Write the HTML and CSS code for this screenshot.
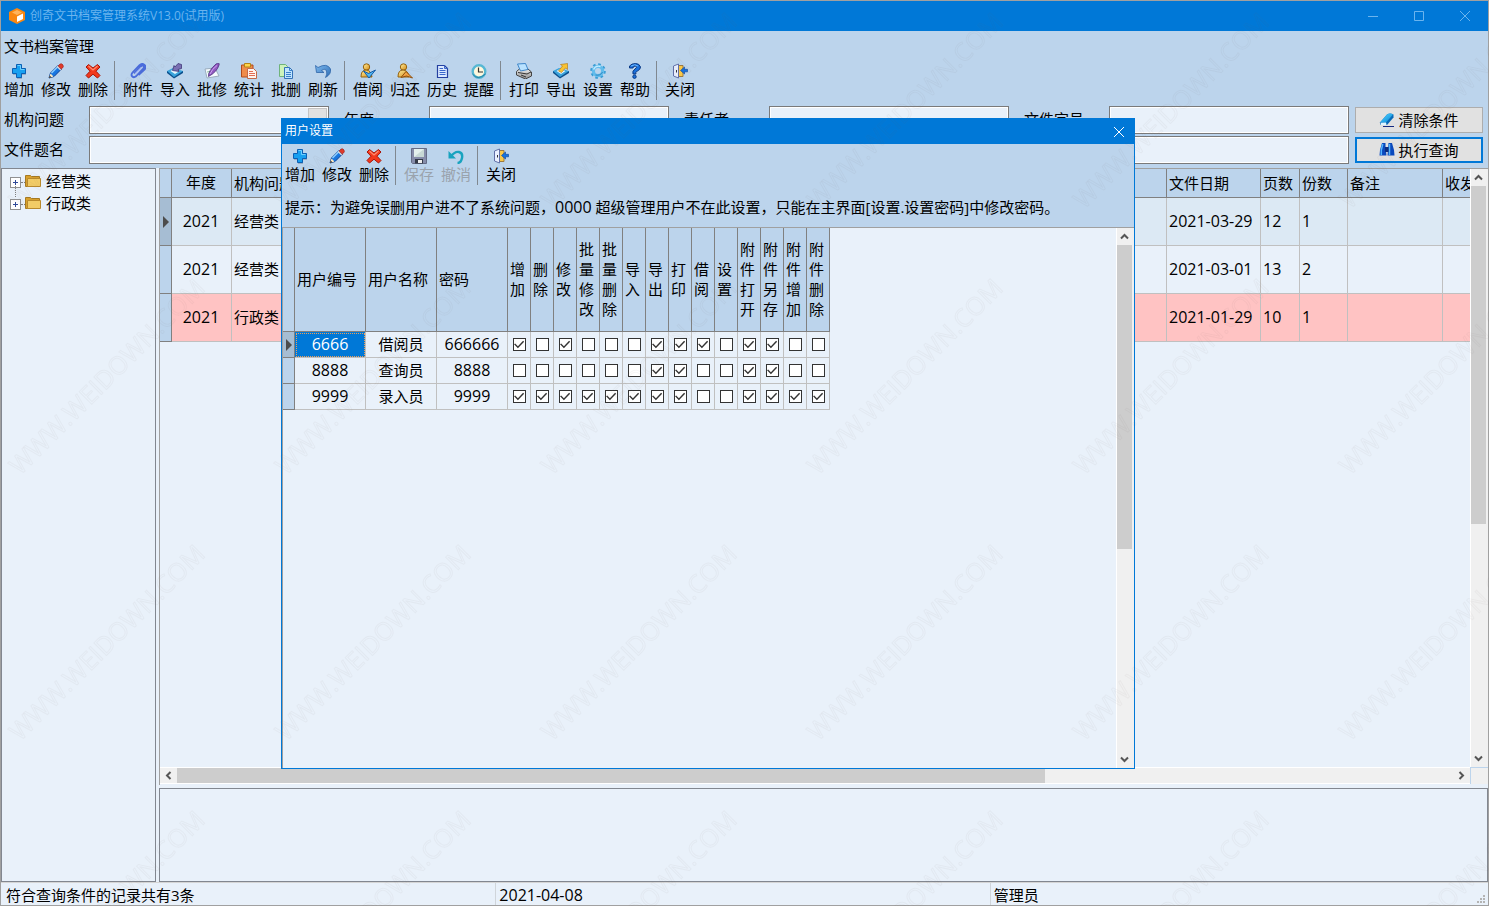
FILE: index.html
```
<!DOCTYPE html>
<html lang="zh-CN">
<head>
<meta charset="utf-8">
<title>创奇文书档案管理系统V13.0(试用版)</title>
<link rel="stylesheet" href="styles.css">
</head>
<body>
<svg class="defs" aria-hidden="true">
  <defs>
    <linearGradient id="gBlue" x1="0" y1="0" x2="1" y2="1"><stop offset="0" stop-color="#5cd4ff"/><stop offset="1" stop-color="#0088d8"/></linearGradient>
    <linearGradient id="gGold" x1="0" y1="0" x2="1" y2="1"><stop offset="0" stop-color="#fff0a0"/><stop offset="1" stop-color="#d88a10"/></linearGradient>
    <linearGradient id="gGray" x1="0" y1="0" x2="0" y2="1"><stop offset="0" stop-color="#f4f4f4"/><stop offset="1" stop-color="#8c8c8c"/></linearGradient>
    <linearGradient id="gSwoosh" x1="0" y1="0" x2="1" y2="1"><stop offset="0" stop-color="#7cb8ee"/><stop offset="1" stop-color="#2c6cb4"/></linearGradient>
    <symbol id="i-add" viewBox="0 0 16 16"><path d="M6 2h5v4.500h4v5h-4V15.500H6v-4H2v-5h4z" fill="#42536a" opacity=".6"/><path d="M5.500 1.500h5v4h4v5h-4v4h-5v-4h-4v-5h4z" fill="#18a0f0" stroke="#0b60b4"/><path d="M6.500 2.500h3v4h4" fill="none" stroke="#6fd0ff"/></symbol>
    <symbol id="i-edit" viewBox="0 0 16 16"><path d="M1 15l1.500-5L10 2.500l3.500 3.500L6 13.500z" fill="#1976e0" stroke="#0c3f94"/><path d="M3.500 10l7-7" stroke="#8fd0ff" stroke-width="1.500"/><path d="M10 3l2-2q2-.8 3 1t-.5 3l-1.200 1.200z" fill="#e03a2a" stroke="#a02018" stroke-width=".6"/><path d="M9.200 3.500l3.500 3.500" stroke="#d9d9d9" stroke-width="1.200"/><path d="M1 15l1.500-4.500 3 3z" fill="#ffe9c0"/><path d="M1 15l.8-2.300 1.500 1.500z" fill="#222"/></symbol>
    <symbol id="i-del" viewBox="0 0 16 16"><path d="M3.500 1.500L8 5l4.500-3.500L15 4l-4 4.200 4 4.300-2.500 2.500L8 11.200 3.500 15 1 12.500l4-4.300L1 4z" fill="#f2381c" stroke="#a81508"/><path d="M3.500 3L8 7l4.500-4" fill="none" stroke="#ff8c70" stroke-width="1.200"/></symbol>
    <symbol id="i-clip" viewBox="0 0 16 16"><path d="M4 10.500l7-7.300q1.500-1.300 2.500-.2t-.3 2.500L6 13.300q-2 1.700-3.700.2T2.500 9.500l7-7.300q2.800-2.400 5-.4t.2 4.600L8.500 12" fill="none" stroke="#4a6cdc" stroke-width="1.800"/><path d="M5 11l6.500-6.500" stroke="#a8bcfa" stroke-width="1.300"/></symbol>
    <symbol id="i-imp" viewBox="0 0 16 16"><path d="M0 8v2l7 5.500L16 10V8z" fill="#0c4f8c"/><path d="M0 8l6-3 10 3-9 6z" fill="#3ba4dc"/><path d="M3.500 8L7 6l5.500 2L8 11z" fill="#e8f6ff"/><path d="M11 .5l3.500 1v4l-3.500 1 1 2-6.500-1L7 2.500l1 1.500z" fill="#7a70b4" stroke="#332a6c" stroke-width=".7"/></symbol>
    <symbol id="i-batch" viewBox="0 0 16 16"><path d="M1 6l10-1 4 8-12 2z" fill="#f5fbff" stroke="#9aacbd"/><path d="M3 9l6-1M4 11l5-1" stroke="#8bbf9c"/><path d="M4.500 13.500Q4 8 12 1q4-2 3 1-2 7-10.500 11.500z" fill="#9058c0" stroke="#4c2c7c" stroke-width=".8"/><path d="M6 11Q8 6 13 2.500" fill="none" stroke="#d0a8f0"/></symbol>
    <symbol id="i-stat" viewBox="0 0 16 16"><path d="M.5 2h11.500v12H.5z" fill="#ef8c4c" stroke="#b14c1c"/><path d="M3.500.5h6V4h-6z" fill="#ffd54a" stroke="#b78416"/><path d="M6.500 5.500h6l3 3v7h-9z" fill="#fff4ee" stroke="#c36a4a"/><path d="M8 8.500h4m-4 2h6m-6 2h6" stroke="#e26c55"/></symbol>
    <symbol id="i-copy" viewBox="0 0 16 16"><path d="M1.500 1.500h6l2 2v10h-8z" fill="#cdf3bb" stroke="#6fb37b"/><path d="M6.500 4.500h5l3 3v8h-8z" fill="#bfe4ff" stroke="#3572b8"/><path d="M11.500 4.500v3h3M8 9.500h5m-5 2h5m-5 2h5" fill="none" stroke="#3c82cb"/></symbol>
    <symbol id="i-refresh" viewBox="0 0 16 16"><path d="M.5 2.500l1 7H9L6.500 7.500Q10.500 5 11.500 8t-1 6.500Q16.500 11 15.500 6 12-.5 3 4.500z" fill="url(#gSwoosh)" stroke="#2e65a8" stroke-width=".8"/></symbol>
    <symbol id="i-lend" viewBox="0 0 16 16"><circle cx="6.500" cy="4" r="3.200" fill="url(#gGold)" stroke="#94620e"/><path d="M1 14q0-7 5-7t6 7z" fill="url(#gGold)" stroke="#94620e"/><path d="M3.500 8l5 2.500L15.500 7 9 15z" fill="#50b8f4" stroke="#145aa6"/></symbol>
    <symbol id="i-return" viewBox="0 0 16 16"><circle cx="6.500" cy="4" r="3.200" fill="url(#gGold)" stroke="#94620e"/><path d="M1 14q0-7 5-7t6 7z" fill="url(#gGold)" stroke="#94620e"/><path d="M4 14.500l5-6 6.500 6.500-6-2z" fill="#f2a345" stroke="#91500c"/></symbol>
    <symbol id="i-doc" viewBox="0 0 16 16"><path d="M3.500 2.500h7l3 3v9h-10z" fill="#dbe9ff" stroke="#2440a0" stroke-width="1.200"/><path d="M10.500 2.500v3h3M5.500 5.500h3.500m-3.500 2h6m-6 2h6m-6 2h6" fill="none" stroke="#3b68cc"/></symbol>
    <symbol id="i-clock" viewBox="0 0 16 16"><circle cx="8" cy="8.500" r="6.300" fill="#fff8dc" stroke="#57b8d4" stroke-width="2.400"/><path d="M1.500 11q5 7 13 0" fill="none" stroke="#2480a1"/><path d="M7.500 4.500v4.500H12" fill="none" stroke="#333" stroke-width="1.200"/></symbol>
    <symbol id="i-print" viewBox="0 0 16 16"><path d="M.5 8.500L4 5.500l8 .5 3.500 3v4l-6 3-9-4z" fill="url(#gGray)" stroke="#444"/><path d="M1.500 1l8-.5 2.500 6-7.500 1.500z" fill="#b9e2ff" stroke="#3f86c9"/><path d="M2 9.500l9 1.500 4-2M5 12l5 2" fill="none" stroke="#333"/></symbol>
    <symbol id="i-exp" viewBox="0 0 16 16"><path d="M0 8v2l7 5.500L16 10V8z" fill="#0c4f8c"/><path d="M0 8l6-3 10 3-9 6z" fill="#3ba4dc"/><path d="M3.500 8L7 6l5.500 2L8 11z" fill="#e8f6ff"/><path d="M14.500.5v6L12.500 5 8.500 9.500 5.500 8l4-5L7.500 1.500z" fill="#f9c332" stroke="#ae7410" stroke-width=".6"/></symbol>
    <symbol id="i-gear" viewBox="0 0 16 16"><circle cx="8" cy="8" r="6.600" fill="none" stroke="#389cd4" stroke-width="2.400" stroke-dasharray="2.600 2.580"/><circle cx="8" cy="8" r="4.600" fill="none" stroke="#62bcec" stroke-width="3.200"/><path d="M3.500 6.500q2-4.500 7-3" fill="none" stroke="#c4ecff" stroke-width="1.400"/><path d="M12.500 9q-2 4-7 3" fill="none" stroke="#2f88c2"/></symbol>
    <symbol id="i-help" viewBox="0 0 16 16"><path d="M2.500 5V3q2-2.500 6-2.500T13.500 4q0 2.500-3 4t-1.500 3H6q-1-3 2-5t.5-3Q6 3 6 5z" fill="#1a70dc" stroke="#0a3984"/><path d="M4 3q4-2.500 7 0" fill="none" stroke="#6cb8ff"/><circle cx="7.500" cy="13.700" r="1.700" fill="#1a70dc" stroke="#0a3984"/></symbol>
    <symbol id="i-exit" viewBox="0 0 16 16"><path d="M6 2.500h5v11H6z" fill="#f9c848" stroke="#9d7b40"/><path d="M1.500 3l5-2v14l-5-2z" fill="#eaf0ff" stroke="#6170a8"/><path d="M4.500 7v2.500" stroke="#333"/><path d="M8.500 7.500l4-3.500v2.300H15.500v2.500h-3V11z" fill="#1673e0" stroke="#0a4199" stroke-width=".6"/></symbol>
    <symbol id="i-save" viewBox="0 0 16 16"><path d="M.5.500h15v15h-14l-1-1z" fill="#868daa" stroke="#656c86"/><path d="M3 1h10v8H3z" fill="#e4f1ed"/><path d="M3 9l10-8v8z" fill="#c8d9d5"/><path d="M4 11h8v4.500H4z" fill="#343b48"/><path d="M7 12h4v3H7z" fill="#eee"/></symbol>
    <symbol id="i-undo" viewBox="0 0 16 16"><path d="M2 9q5-6 9-5t3 6-4.500 5" fill="none" stroke="#18a3bf" stroke-width="2.400"/><path d="M.5 3v7.500h7.500z" fill="#18a3bf"/></symbol>
    <symbol id="i-eraser" viewBox="0 0 16 16"><path d="M1 10.500L8 2.500q3-2 6.500 0v3L8 13H2q-1.500-1-1-2.500z" fill="#0869b8"/><path d="M1 10.500L8 2.500q3-2 6 0L7 10.500z" fill="url(#gBlue)"/><path d="M7 10.500l-5.500.2.5 2.300h5.500z" fill="#ddf5ff"/><path d="M4 14.500h11" stroke="#142a82"/></symbol>
    <symbol id="i-find" viewBox="0 0 16 16"><path d="M3 1h3.500v4L7.500 13.500H.5L1 8zM9.500 1H13l2 7 .5 5.500h-7z" fill="#0b49bd"/><path d="M6 5h4v5H6z" fill="#082c82"/><path d="M3.800 2L2.300 8v5M10.500 2v11" fill="none" stroke="#52b6ff" stroke-width="1.500"/></symbol>
    <symbol id="i-folder" viewBox="0 0 16 14"><path d="M.5 1.500h5l1 1h8v10h-14z" fill="#d8a02c" stroke="#a67a22"/><path d="M2.500 4.500h13v8h-13z" fill="#f2cc66" stroke="#b98a2c"/></symbol>
    <symbol id="i-chev" viewBox="0 0 9 9"><path d="M1 6.500L4.500 3 8 6.500" fill="none" stroke="#555" stroke-width="2"/></symbol>
    <symbol id="i-row" viewBox="0 0 6 12"><path d="M0 0l6 6-6 6z" fill="#4c4c4c"/></symbol>
  </defs>
</svg>

<div class="window">
  <header class="titlebar">
    <svg class="logo" viewBox="0 0 18 18"><path d="M9 1l8 4v8l-8 4-8-4V5z" fill="#f98712"/><path d="M4 5.500L9 3l5 2.500L9 8z" fill="#ffb45c"/><path d="M9 9.500l6-3v5.500l-6 3z" fill="#fff"/></svg>
    <h1 class="title">创奇文书档案管理系统V13.0(试用版)</h1>
    <button class="winbtn" aria-label="最小化"><svg viewBox="0 0 12 12"><path d="M1 6.500h10"/></svg></button>
    <button class="winbtn" aria-label="最大化"><svg viewBox="0 0 12 12"><path d="M1.500 1.500h9v9h-9z"/></svg></button>
    <button class="winbtn" aria-label="关闭"><svg viewBox="0 0 12 12"><path d="M1 1l10 10M11 1L1 11"/></svg></button>
  </header>
  <div class="heading">文书档案管理</div>
  <nav class="toolbar">
    <button class="tool"><svg><use href="#i-add"/></svg>增加</button>
    <button class="tool"><svg><use href="#i-edit"/></svg>修改</button>
    <button class="tool"><svg><use href="#i-del"/></svg>删除</button>
    <span class="sep"></span>
    <button class="tool"><svg><use href="#i-clip"/></svg>附件</button>
    <button class="tool"><svg><use href="#i-imp"/></svg>导入</button>
    <button class="tool"><svg><use href="#i-batch"/></svg>批修</button>
    <button class="tool"><svg><use href="#i-stat"/></svg>统计</button>
    <button class="tool"><svg><use href="#i-copy"/></svg>批删</button>
    <button class="tool"><svg><use href="#i-refresh"/></svg>刷新</button>
    <span class="sep"></span>
    <button class="tool"><svg><use href="#i-lend"/></svg>借阅</button>
    <button class="tool"><svg><use href="#i-return"/></svg>归还</button>
    <button class="tool"><svg><use href="#i-doc"/></svg>历史</button>
    <button class="tool"><svg><use href="#i-clock"/></svg>提醒</button>
    <span class="sep"></span>
    <button class="tool"><svg><use href="#i-print"/></svg>打印</button>
    <button class="tool"><svg><use href="#i-exp"/></svg>导出</button>
    <button class="tool"><svg><use href="#i-gear"/></svg>设置</button>
    <button class="tool"><svg><use href="#i-help"/></svg>帮助</button>
    <span class="sep"></span>
    <button class="tool"><svg><use href="#i-exit"/></svg>关闭</button>
  </nav>
  <form class="search">
    <div class="fields">
      <label class="first" for="org">机构问题</label><span class="combo"><select class="field" id="org"></select></span>
      <label for="year">年度</label><input class="field" id="year">
      <label for="owner">责任者</label><input class="field" id="owner">
      <label for="docno">文件字号</label><input class="field" id="docno">
      <label class="first" for="subject">文件题名</label><input class="field wide" id="subject">
    </div>
    <div class="actions">
      <button class="action" type="button"><svg><use href="#i-eraser"/></svg>清除条件</button>
      <button class="action primary" type="button"><svg><use href="#i-find"/></svg>执行查询</button>
    </div>
  </form>
  <main class="work">
    <ul class="tree">
      <li><span class="plus"></span><svg><use href="#i-folder"/></svg>经营类</li>
      <li><span class="plus"></span><svg><use href="#i-folder"/></svg>行政类</li>
    </ul>
    <section class="right">
      <div class="records">
        <div class="tablebox">
          <table class="grid main">
            <colgroup><col class="w-ind"><col class="w-year"><col class="w-org"><col><col class="w-date"><col class="w-pages"><col class="w-copies"><col class="w-note"><col class="w-last"></colgroup>
            <thead><tr><th></th><th class="mid">年度</th><th>机构问题</th><th></th><th>文件日期</th><th>页数</th><th>份数</th><th>备注</th><th>收发</th></tr></thead>
            <tbody>
              <tr class="current"><td class="ind"><svg><use href="#i-row"/></svg></td><td class="mid num">2021</td><td>经营类</td><td></td><td class="num">2021-03-29</td><td class="num">12</td><td class="num">1</td><td></td><td></td></tr>
              <tr><td class="ind"></td><td class="mid num">2021</td><td>经营类</td><td></td><td class="num">2021-03-01</td><td class="num">13</td><td class="num">2</td><td></td><td></td></tr>
              <tr class="alert"><td class="ind"></td><td class="mid num">2021</td><td>行政类</td><td></td><td class="num">2021-01-29</td><td class="num">10</td><td class="num">1</td><td></td><td></td></tr>
            </tbody>
          </table>
        </div>
        <div class="vscroll"><svg><use href="#i-chev"/></svg><div class="track"><i class="thumb tall"></i></div><svg class="down"><use href="#i-chev"/></svg></div>
        <div class="hscroll"><svg class="left"><use href="#i-chev"/></svg><div class="track"><i class="thumb long"></i></div><svg class="rightward"><use href="#i-chev"/></svg></div>
        <div class="corner"></div>
      </div>
      <div class="detail"></div>
    </section>
  </main>
  <footer class="status"><span>符合查询条件的记录共有3条</span><span class="num">2021-04-08</span><span>管理员</span><svg class="grip" viewBox="0 0 9 9"><path d="M6 0h2v2H6zM3 3h2v2H3zM6 3h2v2H6zM0 6h2v2H0zM3 6h2v2H3zM6 6h2v2H6z"/></svg></footer>
</div>

<div class="dialog" role="dialog" aria-labelledby="dlg-title">
  <header class="dlg-title"><h2 id="dlg-title">用户设置</h2><button class="dlg-close" aria-label="关闭"><svg viewBox="0 0 12 12"><path d="M1 1l10 10M11 1L1 11"/></svg></button></header>
  <nav class="toolbar dlg-tools">
    <button class="tool"><svg><use href="#i-add"/></svg>增加</button>
    <button class="tool"><svg><use href="#i-edit"/></svg>修改</button>
    <button class="tool"><svg><use href="#i-del"/></svg>删除</button>
    <span class="sep"></span>
    <button class="tool" disabled><svg><use href="#i-save"/></svg>保存</button>
    <button class="tool" disabled><svg><use href="#i-undo"/></svg>撤消</button>
    <span class="sep"></span>
    <button class="tool"><svg><use href="#i-exit"/></svg>关闭</button>
  </nav>
  <p class="hint">提示：为避免误删用户进不了系统问题，<span class="num">0000</span> 超级管理用户不在此设置，只能在主界面[设置.设置密码]中修改密码。</p>
  <div class="users">
    <div class="tablebox">
      <table class="grid perms">
        <thead><tr id="perm-head"><th class="p-ind"></th><th class="p-text">用户编号</th><th class="p-text">用户名称</th><th class="p-text">密码</th></tr></thead>
        <tbody id="perm-body"></tbody>
      </table>
    </div>
    <div class="vscroll"><svg><use href="#i-chev"/></svg><div class="track"><i class="thumb dlg-thumb"></i></div><svg class="down"><use href="#i-chev"/></svg></div>
  </div>
</div>

<svg class="watermark" aria-hidden="true">
  <defs><pattern id="wm" width="266" height="266" patternUnits="userSpaceOnUse"><text class="wm-text" transform="translate(20 210) rotate(-45)">WWW.WEIDOWN.COM</text></pattern></defs>
  <rect width="100%" height="100%" fill="url(#wm)"/>
</svg>
<script src="users.js"></script>
</body>
</html>
```
FILE: users.js
```
const permissions = ["增加", "删除", "修改", "批量修改", "批量删除", "导入", "导出", "打印", "借阅", "设置", "附件打开", "附件另存", "附件增加", "附件删除"];
const users = [
  { id: "6666", name: "借阅员", password: "666666", flags: "10100011101100" },
  { id: "8888", name: "查询员", password: "8888", flags: "00000011001100" },
  { id: "9999", name: "录入员", password: "9999", flags: "11111111001111" }
];
const head = document.getElementById("perm-head");
permissions.forEach(name => head.insertAdjacentHTML("beforeend", `<th class="p-flag">${name}</th>`));
document.getElementById("perm-body").innerHTML = users.map((user, row) => {
  const marker = row === 0 ? '<svg><use href="#i-row"/></svg>' : "";
  const boxes = permissions.map((name, i) =>
    `<td class="flag"><input type="checkbox" aria-label="${user.name} ${name}"${user.flags[i] === "1" ? " checked" : ""}></td>`).join("");
  return `<tr class="${row === 0 ? "current" : ""}"><td class="ind">${marker}</td><td class="mid num${row === 0 ? " picked" : ""}">${user.id}</td><td class="mid">${user.name}</td><td class="mid num">${user.password}</td>${boxes}</tr>`;
}).join("");
```
FILE: styles.css
```
* { box-sizing: border-box; }
body {
  margin: 0;
  height: 100vh;
  overflow: hidden;
  position: relative;
  font: 15px/20px "Open Sans", "Noto Sans CJK SC", sans-serif;
  color: #000;
  background: #bcd4ec;
}
button { font: inherit; color: inherit; }
.defs { position: absolute; width: 0; height: 0; }
.num { font-size: 16px; }

.window { height: 100vh; display: flex; flex-direction: column; border: 1px solid #a0a0a0; }
.titlebar { flex: none; height: 30px; display: flex; align-items: center; background: #0078d7; padding-left: 7px; }
.logo { width: 18px; height: 18px; }
.title { flex: 1; margin: 0 0 0 4px; font-size: 12px; font-weight: 400; color: #6bb4ee; }
.winbtn { width: 46px; height: 30px; padding: 0; border: 0; background: none; display: grid; place-items: center; }
.winbtn svg { width: 12px; height: 12px; fill: none; stroke: #6bb4ee; }

.heading { flex: none; height: 30px; padding: 5px 3px; }
.toolbar { flex: none; display: flex; height: 45px; }
.tool { width: 36px; height: 40px; margin-right: 1px; padding: 2px 0 0; border: 0; background: none; display: flex; flex-direction: column; align-items: center; white-space: nowrap; line-height: 20px; }
.tool svg { width: 16px; height: 16px; }
.tool:disabled { color: #9aa3ad; }
.sep { width: 8px; height: 39px; background: linear-gradient(#808890, #808890) 2px 0 / 1px 100% no-repeat; }

.search { flex: none; display: flex; gap: 6px; padding: 0 5px 4px 0; }
.fields { flex: 1; display: grid; grid-template-columns: 88px 1fr 100px 1fr 100px 1fr 100px 1fr; row-gap: 2px; align-items: center; }
.fields label { padding: 0 0 2px 15px; }
.fields .first { padding-left: 3px; }
.field { width: 100%; min-width: 0; height: 28px; padding: 2px 4px; border: 1px solid #7a7a7a; border-radius: 0; box-shadow: inset 0 0 0 1px #fff; background: #e9f1fa; font: inherit; appearance: none; outline: 0; }
.wide { grid-column: 2 / -1; }
.combo { position: relative; display: block; height: 28px; }
.combo::after { content: ""; position: absolute; right: 2px; top: 2px; bottom: 2px; width: 17px; border: 1px solid #c4c4c4; background: #e1e1e1; pointer-events: none; }
.actions { width: 128px; display: grid; gap: 4px; padding: 1px 0; }
.action { display: flex; align-items: center; justify-content: center; gap: 3px; height: 26px; padding: 0; border: 1px solid #adadad; background: #e1e1e1; }
.action svg { width: 16px; height: 16px; }
.primary { border: 2px solid #0078d7; }

.work { flex: 1; min-height: 0; display: flex; gap: 3px; background: #e9f1fa; }
.tree { flex: none; width: 155px; margin: 0; padding: 1px 0 0 8px; list-style: none; border: 1px solid #828790; }
.tree li { display: flex; align-items: center; height: 22px; position: relative; }
.tree svg { width: 16px; height: 14px; margin: 0 5px 0 4px; }
.tree li + li::before { content: ""; position: absolute; left: 5px; top: -6px; height: 11px; border-left: 1px dotted #808080; }
.plus { width: 11px; height: 9px; margin-top: 2px; position: relative; }
.plus { height: 11px; border: 1px solid #919191; background: linear-gradient(#304a98, #304a98) center / 5px 1px no-repeat, linear-gradient(#304a98, #304a98) center / 1px 5px no-repeat, #fff; }
.plus::after { content: ""; position: absolute; left: 10px; top: 4px; width: 4px; border-top: 1px dotted #808080; }
.right { flex: 1; min-width: 0; display: flex; flex-direction: column; gap: 3px; }
.records { flex: 1; min-height: 0; display: grid; grid-template: minmax(0, 1fr) 17px / minmax(0, 1fr) 18px; padding-bottom: 1px; border: 1px solid #a0a0a0; border-width: 1px 0 0 1px; }
.tablebox { overflow: hidden; min-width: 0; background: #e9f1fa; }
.detail { flex: none; height: 94px; border: 1px solid #828790; }

.grid { border-collapse: separate; border-spacing: 0; table-layout: fixed; }
.grid th { font-weight: 400; text-align: left; background: #bcd4ec; border: solid #808080; border-width: 0 1px 1px 0; padding: 0 2px; overflow: hidden; white-space: nowrap; }
.grid td { border: solid #c0c0c0; border-width: 0 1px 1px 0; padding: 0 2px 2px; white-space: nowrap; }
.grid .mid { text-align: center; padding: 0 0 2px; }
.grid .ind { background: #bcd4ec; border-color: #808080; padding: 0 0 0 3px; }
.grid .ind svg { display: block; width: 6px; height: 12px; }
.grid .current .ind { background: #a6bdd3; }
.main { width: 100%; }
.main th { height: 29px; }
.main .mid { padding-right: 1px; }
.main th:last-child, .main td:last-child { border-right: 0; }
.main td { height: 48px; }
.main .current td { background: #dce9f4; }
.alert td { background: #ffc3c3; }
.w-ind { width: 12px; }
.w-year { width: 60px; }
.w-org { width: 94px; }
.w-date { width: 94px; }
.w-pages { width: 39px; }
.w-copies { width: 48px; }
.w-note { width: 95px; }
.w-last { width: 27px; }

.vscroll, .hscroll { display: flex; align-items: center; background: #f0f0f0; }
.vscroll { flex-direction: column; border-left: 1px solid #fff; padding-right: 2px; }
.hscroll { border-top: 1px solid #fff; border-bottom: 1px solid #fff; }
.vscroll > svg, .hscroll > svg { flex: none; width: 9px; height: 9px; margin: 4px; }
.track { flex: 1; align-self: stretch; display: flex; }
.vscroll .track { flex-direction: column; }
.thumb { background: #cdcdcd; }
.tall { height: 60%; }
.long { width: 68%; }
.dlg-thumb { height: 60%; }
.down { transform: rotate(180deg); }
.left { transform: rotate(-90deg); }
.rightward { transform: rotate(90deg); }
.corner { border: 1px solid #bcd4ec; border-width: 1px 0 0 1px; background: #f0f0f0; }

.status { flex: none; height: 23px; display: grid; grid-template-columns: repeat(3, 1fr); align-items: center; position: relative; padding-right: 4px; background: #e9f1fa; border-top: 1px solid #d5d5d5; }
.status span { padding: 2px 3px 0; border-left: 1px solid #d0d5da; }
.status span:first-child { padding-left: 4px; border-left-color: transparent; }
.grip { position: absolute; right: 2px; bottom: 1px; width: 9px; height: 9px; fill: #b4b4b4; }

.dialog { position: absolute; left: 281px; right: 354px; top: 118px; bottom: 137px; display: flex; flex-direction: column; border: 1px solid #0078d7; background: #bcd4ec; }
.dlg-title { flex: none; height: 25px; display: flex; align-items: center; justify-content: space-between; padding: 0 0 2px 3px; background: #0078d7; color: #fff; }
.dlg-title h2 { margin: 0; font-size: 12px; font-weight: 400; line-height: 20px; }
.dlg-close { width: 31px; height: 24px; padding: 2px 0 0; border: 0; background: none; display: grid; place-items: center; }
.dlg-close svg { width: 12px; height: 12px; fill: none; stroke: #fff; }
.dlg-tools { padding-top: 2px; height: 47px; }
.hint { flex: none; margin: 0; padding: 6px 4px 10px 3px; white-space: nowrap; }
.users { flex: 1; min-height: 0; display: grid; grid-template-columns: minmax(0, 1fr) 18px; border: 1px solid #a0a0a0; border-width: 1px 0 0 1px; }
.perms { width: 547px; }
.perms th { height: 104px; padding-bottom: 2px; }
.perms td { height: 26px; line-height: 20px; }
.p-ind { width: 12px; }
.p-text { width: 71px; }
.grid .p-flag { width: 23px; padding: 0 4px 2px 2px; white-space: normal; word-break: break-all; }
.perms .picked { background: #0078d7; color: #fff; outline: 1px dotted #e9a05c; outline-offset: -2px; }
.perms .flag { padding: 0; text-align: center; }
.flag input { appearance: none; display: block; width: 13px; height: 13px; margin: 0 auto; border: 1px solid #333; background: #fff; }
.flag input:checked::after { content: ""; display: block; width: 11px; height: 11px; background: #333; clip-path: polygon(5% 48%, 15% 40%, 40% 65%, 87% 15%, 97% 25%, 40% 83%); }

.watermark { position: absolute; left: 0; top: 0; width: 100%; height: 100%; pointer-events: none; }
.wm-text { font: 25px "Open Sans", sans-serif; fill: none; stroke: rgba(90, 80, 70, 0.05); stroke-width: 1px; }
```
